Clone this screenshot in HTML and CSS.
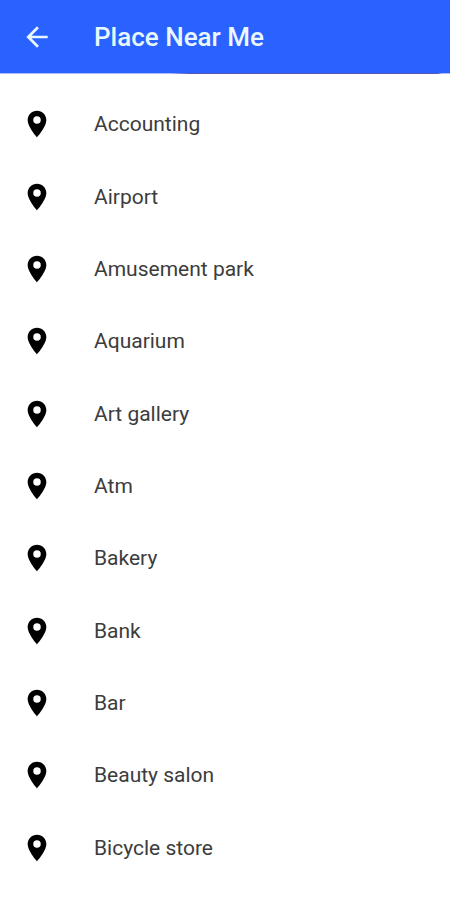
FILE: index.html
```html
<!DOCTYPE html>
<html lang="en">
<head>
<meta charset="utf-8">
<meta name="viewport" content="width=device-width, initial-scale=1">
<title>Place Near Me</title>
<link rel="stylesheet" href="styles.css">
</head>
<body>
<svg width="0" height="0" class="sprite" aria-hidden="true">
  <symbol id="pin" viewBox="0 0 24 24"><path fill-rule="evenodd" d="M12 2C8.130 2 5 5.130 5 9c0 5.250 7 13 7 13s7-7.750 7-13c0-3.870-3.130-7-7-7zm0 9.800a2.800 2.800 0 1 1 0-5.600 2.800 2.800 0 0 1 0 5.600z"/></symbol>
</svg>
<header class="bar">
  <button class="back" type="button" aria-label="Back"><svg class="icon" viewBox="0 0 24 24" aria-hidden="true"><path d="M20 11H7.830l5.590-5.590L12 4l-8 8 8 8 1.410-1.410L7.830 13H20v-2z"/></svg></button>
  <h1 class="title">Place Near Me</h1>
</header>
<main class="content">
  <ul class="list">
    <li class="row"><svg class="icon pin" aria-hidden="true"><use href="#pin"/></svg><span>Accounting</span></li>
    <li class="row"><svg class="icon pin" aria-hidden="true"><use href="#pin"/></svg><span>Airport</span></li>
    <li class="row"><svg class="icon pin" aria-hidden="true"><use href="#pin"/></svg><span>Amusement park</span></li>
    <li class="row"><svg class="icon pin" aria-hidden="true"><use href="#pin"/></svg><span>Aquarium</span></li>
    <li class="row"><svg class="icon pin" aria-hidden="true"><use href="#pin"/></svg><span>Art gallery</span></li>
    <li class="row"><svg class="icon pin" aria-hidden="true"><use href="#pin"/></svg><span>Atm</span></li>
    <li class="row"><svg class="icon pin" aria-hidden="true"><use href="#pin"/></svg><span>Bakery</span></li>
    <li class="row"><svg class="icon pin" aria-hidden="true"><use href="#pin"/></svg><span>Bank</span></li>
    <li class="row"><svg class="icon pin" aria-hidden="true"><use href="#pin"/></svg><span>Bar</span></li>
    <li class="row"><svg class="icon pin" aria-hidden="true"><use href="#pin"/></svg><span>Beauty salon</span></li>
    <li class="row"><svg class="icon pin" aria-hidden="true"><use href="#pin"/></svg><span>Bicycle store</span></li>
  </ul>
</main>
</body>
</html>
```
FILE: styles.css
```css
* { box-sizing: border-box; }
body {
  display: flex;
  flex-direction: column;
  min-height: 100vh;
  margin: 0;
  background: #fff;
  color: #3c3c3c;
  font-family: Roboto, "Liberation Sans", sans-serif;
}
.sprite { display: none; }
.bar {
  display: flex;
  flex: none;
  align-items: center;
  gap: 41px;
  min-height: 74px;
  padding: 0 21px;
  border-bottom: 1px solid;
  border-image: linear-gradient(to right, #a9bdf8 38%, #5555bb 42%, #5555bb 97%, #a9bdf8 98%) 1;
  background: #2962ff;
  color: #e9f8ff;
}
.back {
  display: flex;
  padding: 0;
  border: 0;
  background: none;
  color: inherit;
}
.icon {
  flex: none;
  width: 32px;
  height: 32px;
  fill: currentColor;
}
.title {
  margin: 0;
  font-size: 26px;
  font-weight: 500;
  line-height: 32px;
}
.content {
  display: flex;
  flex: 1;
}
.list {
  display: grid;
  flex: 1;
  grid-auto-rows: 1fr;
  margin: 0;
  padding: 14px 21px 16px;
  list-style: none;
}
.row {
  display: flex;
  align-items: center;
  gap: 41px;
  min-height: 64px;
  font-size: 21px;
  line-height: 28px;
}
.pin { color: #000; }
```
